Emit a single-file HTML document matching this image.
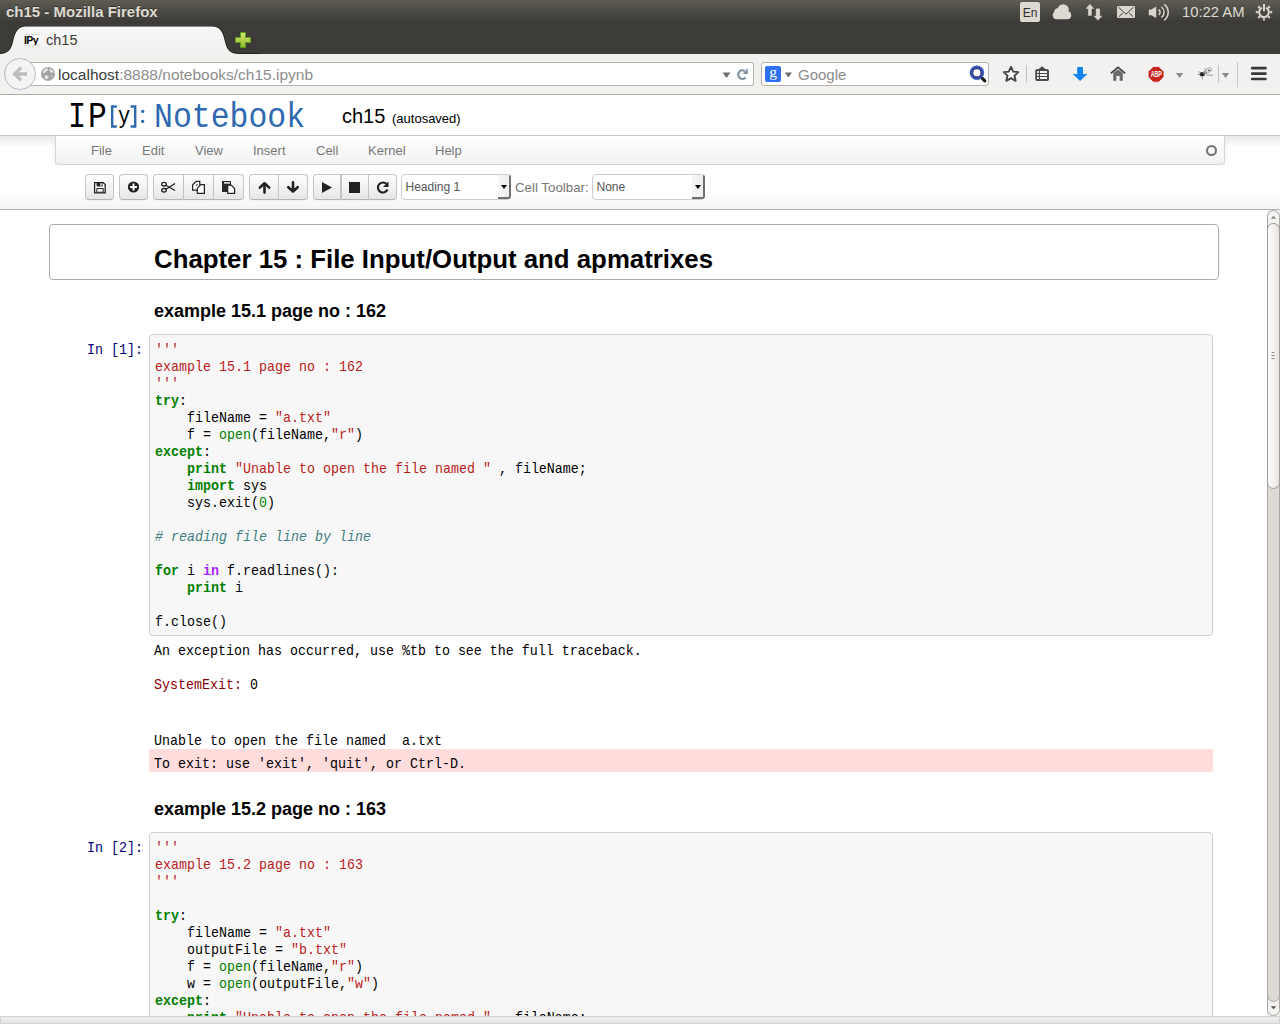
<!DOCTYPE html>
<html><head><meta charset="utf-8">
<style>
*{margin:0;padding:0;box-sizing:border-box}
html,body{width:1280px;height:1024px;overflow:hidden;background:#fff;font-family:"Liberation Sans",sans-serif;position:relative}
.abs{position:absolute}
#titlebar{left:0;top:0;width:1280px;height:26px;background:linear-gradient(#5f5c52 0px,#4f4d47 9px,#3c3b37 22px,#3c3b37)}
#titletext{left:6px;top:3px;font-size:15px;line-height:18px;font-weight:bold;color:#dfdbd2;text-shadow:0 -1px 0 rgba(0,0,0,.35)}
#tabbar{left:0;top:26px;width:1280px;height:28px;background:#3c3b37}
#navbar{left:0;top:54px;width:1280px;height:41px;background:#f2f1f0;border-bottom:1px solid #aeaca7}
.mono{font-family:"Liberation Mono",monospace}
pre{font-family:"Liberation Mono",monospace;font-size:14.4px;line-height:17px;white-space:pre;transform:scaleX(0.926);transform-origin:0 0}
.cm-s{color:#ba2121}
.cm-k{color:#008000;font-weight:bold}
.cm-b{color:#008000}
.cm-n{color:#080}
.cm-c{color:#408080;font-style:italic}
.cm-o{color:#aa22ff;font-weight:bold}
.prompt{font-family:"Liberation Mono",monospace;font-size:14.4px;color:#000080;line-height:17px;transform:scaleX(0.926);transform-origin:0 0}
.codebox{background:#f7f7f7;border:1px solid #cfcfcf;border-radius:4px}
.hd{font-weight:bold;color:#000}
</style></head><body>
<!-- title bar -->
<div id="titlebar" class="abs"></div>
<div id="titletext" class="abs">ch15 - Mozilla Firefox</div>
<!-- tab bar -->
<div id="tabbar" class="abs"></div>
<svg class="abs" style="left:0;top:26px" width="260" height="28">
  <defs><linearGradient id="tabg" x1="0" y1="0" x2="0" y2="1"><stop offset="0" stop-color="#f8f8f8"/><stop offset="1" stop-color="#f1f0ef"/></linearGradient>
  <linearGradient id="plg" x1="0" y1="0" x2="0" y2="1"><stop offset="0" stop-color="#d3e86a"/><stop offset="1" stop-color="#93b92e"/></linearGradient></defs>
  <rect x="0" y="27" width="260" height="1" fill="#222120"/>
  <path d="M-1,28 C8,28 11,24 13,16 C15,6 18,0.5 26,0.5 L212,0.5 C220,0.5 223,6 225,16 C227,24 230,28 239,28" fill="#1e1d1b" stroke="#1e1d1b" stroke-width="1.6"/>
  <path d="M-1,28 C8,28 11,24 13,16 C15,6 18,0.5 26,0.5 L212,0.5 C220,0.5 223,6 225,16 C227,24 230,28 239,28 Z" fill="url(#tabg)"/>
  <path d="M240.5,6.5 h5 v5 h5 v5 h-5 v5 h-5 v-5 h-5 v-5 h5 z" fill="url(#plg)" stroke="#5f9a22" stroke-width="1"/>
</svg>
<div class="abs" style="left:24px;top:34px;width:16px;height:12px;background:#fbfbfb;border-top:1px solid #d8d8d8;border-bottom:1px solid #d8d8d8;font-size:10.5px;font-weight:bold;color:#000;line-height:11px;letter-spacing:-0.6px;white-space:nowrap;overflow:hidden">IPy</div>
<div class="abs" style="left:46px;top:32px;font-size:14.5px;color:#3c3b37">ch15</div>
<!-- nav bar -->
<div id="navbar" class="abs"></div>
<div class="abs" style="left:28px;top:62px;width:726px;height:24px;background:#fff;border:1px solid #b7b4ae;border-left:none;border-radius:0 3px 3px 0"></div>
<svg class="abs" style="left:3px;top:57px" width="36" height="34">
  <circle cx="17" cy="17" r="15.5" fill="#f5f4f3" stroke="#b0bcc7" stroke-width="1"/>
  <path d="M18.2,10.6 L11.6,16.9 L18.2,23.2" fill="none" stroke="#bdbdbd" stroke-width="3.3" stroke-linejoin="miter"/><rect x="12.5" y="15.2" width="11.5" height="3.6" fill="#bdbdbd"/>
</svg>
<svg class="abs" style="left:40px;top:66px" width="16" height="16"><circle cx="8" cy="7.9" r="7" fill="#a3a3a3"/><path d="M3.2,5 C4.5,3 6.5,2.2 8,2.6 C8.5,4 7,5 6,5.5 C5.5,7 4,7.5 3,7 Z M9.5,3 C11.5,3 13,4.5 13.7,6.5 C12.5,7 11.5,6 10.5,6.3 C10,5 9.3,4 9.5,3 Z M5,9.5 C6.5,9 8.5,10 8.7,11.5 C8,13 6,13.5 5,12.5 C5,11.5 4.5,10.5 5,9.5 Z M11.5,9 C12.5,9.3 13,10.5 12.5,11.5 C12,11.5 11.3,10.5 11.5,9 Z" fill="#e9e9e9"/></svg>
<div class="abs" style="left:58px;top:66px;font-size:15.5px;line-height:18px;color:#3c3c3c;white-space:nowrap">localhost<span style="color:#8c8c8c">:8888/notebooks/ch15.ipynb</span></div>
<svg class="abs" style="left:720px;top:64px" width="34" height="20">
  <path d="M2.6,8.5 L10.5,8.5 L6.5,14 Z" fill="#6e6e6e"/>
  <path d="M24.8,7 A4.3,4.3 0 1 0 25.6,13.6" stroke="#8393a3" stroke-width="2.2" fill="none"/><path d="M22.6,9.9 L27.8,9.9 L27.8,4.1 Z" fill="#8393a3"/>
</svg>
<div class="abs" style="left:761px;top:62px;width:228px;height:24px;background:#fff;border:1px solid #b7b4ae;border-radius:3px"></div>
<svg class="abs" style="left:765px;top:66px" width="16" height="16"><rect width="16" height="16" rx="2" fill="#2f6ff5"/><text x="8" y="11" font-size="15.5" font-family="Liberation Serif" fill="#fff" text-anchor="middle">g</text></svg>
<svg class="abs" style="left:783px;top:72px" width="10" height="8"><path d="M1.8,0.6 L9,0.6 L5.4,5.6 Z" fill="#6e6e6e"/></svg>
<div class="abs" style="left:798px;top:66px;font-size:15px;line-height:18px;color:#8c8c8c">Google</div>
<svg class="abs" style="left:968px;top:64px" width="20" height="20">
  <path d="M13.2,13.2 L16.8,16.8" stroke="#1d1b18" stroke-width="3.2" stroke-linecap="round"/>
  <circle cx="8.9" cy="8.8" r="5.5" fill="#fbfbfb" stroke="#3d4fb3" stroke-width="3"/>
  <circle cx="8.9" cy="8.8" r="4.1" fill="none" stroke="#1c1f5a" stroke-width="0.9"/>
  <circle cx="8.9" cy="8.8" r="6.9" fill="none" stroke="#2a5aa8" stroke-width="0.6"/>
</svg>
<!-- toolbar icons -->
<svg class="abs" style="left:1000px;top:62px" width="280" height="26">
  <path d="M11,4.8 L13.2,9.6 L18.3,10.1 L14.5,13.6 L15.6,18.8 L11,16.2 L6.4,18.8 L7.5,13.6 L3.7,10.1 L8.8,9.6 Z" fill="#fafafa" stroke="#474747" stroke-width="1.9" stroke-linejoin="round"/>
  <rect x="26" y="3" width="1" height="18" fill="#bcc5ce"/>
  <path d="M42,4.2 L46,7.5 L38,7.5 Z" fill="#4a4a4a"/>
  <rect x="35.2" y="7" width="13.8" height="12" rx="2" fill="#4a4a4a"/>
  <g fill="#f2f2f2"><rect x="37" y="9" width="1.8" height="2"/><rect x="37" y="12" width="1.8" height="2"/><rect x="37" y="15" width="1.8" height="2"/>
  <rect x="40" y="9" width="7" height="2"/><rect x="40" y="12" width="7" height="2"/><rect x="40" y="15" width="7" height="2"/></g>
  <path d="M77.2,5 h5.8 v7 h4.3 l-7.2,7 l-7.2,-7 h4.3 z" fill="#0f83f0"/>
  <path d="M110.8,11.3 L118,5.3 L125.2,11.3" fill="none" stroke="#3e3e3e" stroke-width="1.7" stroke-linejoin="miter"/><path d="M113.2,10.8 L118,7.6 L122.8,10.8 V18.8 H119.6 V14 H116.4 V18.8 H113.2 Z" fill="#6b6b6b"/>
  <polygon points="153.3,4.4 158.8,4.4 164,9.6 164,15 158.8,20.2 153.3,20.2 148.1,15 148.1,9.6" fill="#c9231f" stroke="#f0f0f0" stroke-width="0.9"/>
  <text x="156.2" y="15.1" font-size="8.6" font-weight="bold" fill="#fff" text-anchor="middle" font-family="Liberation Sans" textLength="11" lengthAdjust="spacingAndGlyphs" transform="translate(0,-2.3) scale(1,1.15)">ABP</text>
  <path d="M176,11 L183.2,11 L179.6,16 Z" fill="#8a8a8a"/>
  <g><ellipse cx="202.2" cy="12.2" rx="2.6" ry="2.2" fill="#2a2a2a"/><ellipse cx="205" cy="10.5" rx="2.2" ry="1.6" fill="#888"/><ellipse cx="208.5" cy="8.2" rx="3.6" ry="2.2" transform="rotate(-25 208.5 8.2)" fill="#dcdcdc" stroke="#999" stroke-width="0.6"/><ellipse cx="209" cy="8.5" rx="1.2" ry="0.8" fill="#555"/><path d="M198,9.5 L201,11 M197.5,12.5 L200,12.5 M202,14.5 L202.5,17.5 M206,13 L213,13.2 M204.5,6 L206,9" stroke="#777" stroke-width="0.7"/></g>
  <rect x="218" y="3" width="1" height="18" fill="#c4c2be"/>
  <path d="M222,11 L229.2,11 L225.6,16 Z" fill="#8a8a8a"/>
  <rect x="237" y="0" width="1" height="25" fill="#c4c8cc"/>
  <path d="M252.2,6.2 h13.3 M252.2,11.6 h13.3 M252.2,17 h13.3" stroke="#3a3a3a" stroke-width="2.7" stroke-linecap="round"/>
</svg>
<!-- indicator icons -->
<div class="abs" style="left:1020px;top:2px;width:20px;height:20px;background:#dedad2;border-radius:2px;color:#2e2d2a;font-size:12px;line-height:22px;text-align:center">En</div>
<svg class="abs" style="left:1050px;top:0px" width="230" height="24">
  <g fill="#dedad2"><rect x="2.8" y="11.2" width="18.4" height="8.1" rx="4"/><circle cx="13.2" cy="9.8" r="5.6"/><circle cx="7.8" cy="11.8" r="3.5"/></g>
  <path d="M40,3.5 L44.8,9 L42,9 L42,16 L37.8,16 L37.8,9 L35,9 Z M48,20.7 L53,15.5 L50.3,15.5 L50.3,8.2 L45.6,8.2 L45.6,15.5 L42.9,15.5 Z" fill="#dad6cd" stroke="#2a2a26" stroke-width="0.5"/>
  <rect x="67" y="6" width="18" height="12" rx="1" fill="#dad6cd"/>
  <path d="M68.5,7.2 L76,14.2 L83.5,7.2 M68.8,16.8 L72.8,13 M83.2,16.8 L79.2,13" stroke="#3c3b37" stroke-width="1" fill="none"/>
  <path d="M98.8,9.4 h2.6 l4.8,-2.8 v11.4 l-4.8,-2.8 h-2.6 z" fill="#dad6cd"/>
  <path d="M108.6,9.5 a3.2,3.2 0 0 1 0,5.4 M111.4,7 a6.5,6.5 0 0 1 0,10.5 M114.2,4.3 a10,10 0 0 1 0,16" stroke="#dad6cd" stroke-width="1.5" fill="none"/>
  <g transform="translate(214,12.2)" fill="none" stroke="#dad6cd">
    <circle r="4.9" stroke-width="2.1" stroke-dasharray="26 4.8" transform="rotate(-66)"/>
    <path d="M0,-8.2 v7.2" stroke-width="2"/>
    <path d="M8.2,0 h-2 M-8.2,0 h2 M5.8,5.8 l-1.5,-1.5 M-5.8,5.8 l1.5,-1.5 M5.8,-5.8 l-1.5,1.5 M-5.8,-5.8 l1.5,1.5 M0,8.2 v-2" stroke-width="2.2"/>
  </g>
</svg>
<div class="abs" style="left:1182px;top:3px;font-size:14.8px;line-height:18px;color:#dfdbd2">10:22 AM</div>

<!-- notebook header -->
<div class="abs" style="left:0;top:95px;width:1280px;height:41px;background:#fff;border-bottom:1px solid #c8c8c8"></div>
<div class="abs mono" style="left:68.4px;top:98px;font-size:36px;line-height:40px;color:#000;transform:scaleX(0.84);transform-origin:0 0">I</div>
<div class="abs mono" style="left:87.6px;top:98px;font-size:36px;line-height:40px;color:#000;transform:scaleX(0.87);transform-origin:0 0">P</div>
<svg class="abs" style="left:100px;top:100px" width="50" height="30">
 <path d="M16.8,6.5 h-4.6 v20 h4.6" fill="none" stroke="#2f69b0" stroke-width="2.4"/>
 <path d="M30.6,6.5 h4.6 v20 h-4.6" fill="none" stroke="#2f69b0" stroke-width="2.4"/>
 <circle cx="42.7" cy="11.4" r="1.7" fill="#2f69b0"/><circle cx="42.7" cy="21.4" r="1.7" fill="#2f69b0"/>
</svg>
<div class="abs mono" style="left:118px;top:101.5px;font-size:23.5px;line-height:30px;color:#000;transform:scaleX(0.87);transform-origin:0 0">y</div>
<div class="abs mono" style="left:154.3px;top:98px;font-size:34.5px;line-height:40px;color:#2f69b0;transform:scaleX(0.912);transform-origin:0 0;white-space:nowrap">Notebook</div>
<div class="abs" style="left:342px;top:105px;font-size:20px;line-height:23px;color:#000;white-space:nowrap">ch15</div><div class="abs" style="left:392px;top:111px;font-size:13px;line-height:15px;color:#000;white-space:nowrap">(autosaved)</div>

<div class="abs" style="left:0;top:136px;width:1280px;height:12px;background:linear-gradient(rgba(87,87,87,0.13),rgba(87,87,87,0))"></div>
<!-- menubar -->
<div class="abs" style="left:55px;top:135px;width:1170px;height:30px;background:linear-gradient(#fff,#f2f2f2);border:1px solid #d4d4d4;border-top-color:#c8c8c8;border-radius:0 0 4px 4px;box-shadow:0 1px 4px rgba(0,0,0,0.065)"></div>
<div class="abs" style="left:91px;top:143px;font-size:13px;color:#777;white-space:nowrap;line-height:15px">
<span class="abs" style="left:0">File</span><span class="abs" style="left:51px">Edit</span><span class="abs" style="left:104px">View</span><span class="abs" style="left:162px">Insert</span><span class="abs" style="left:225px">Cell</span><span class="abs" style="left:277px">Kernel</span><span class="abs" style="left:344px">Help</span>
</div>
<div class="abs" style="left:1206px;top:145px;width:11px;height:11px;border:2px solid #737373;border-radius:50%"></div>

<!-- toolbar -->
<div class="abs" style="left:0;top:165px;width:1280px;height:45px;background:linear-gradient(#fff 60%,#f4f4f4);border-bottom:1px solid #b5b5b5"></div>

<!-- toolbar buttons -->
<style>
.btn{position:absolute;top:174px;height:26px;background:linear-gradient(#ffffff,#e6e6e6);border:1px solid #c5c5c5;border-bottom-color:#b3b3b3;box-shadow:0 1px 2px rgba(0,0,0,.05)}
.r{border-radius:4px}.rl{border-radius:4px 0 0 4px}.rr{border-radius:0 4px 4px 0}.r0{border-radius:0;border-left:none}
.sel{position:absolute;top:174px;height:25.5px;background:#fff;border:1px solid #cdcdcd;border-radius:4px;font-size:12px;color:#555;line-height:15px;padding-left:3.5px;padding-top:5px}
.selbtn{position:absolute;top:0px;right:-1px;width:13px;height:24px;background:linear-gradient(90deg,#f6f6f6,#eeeeee);border-right:2px solid #707070;border-bottom:2px solid #707070;border-radius:0 2px 3px 0}
.selbtn:after{content:"";position:absolute;left:2.5px;top:9.5px;border-left:3.5px solid transparent;border-right:3.5px solid transparent;border-top:4px solid #000}
</style>
<div class="btn r" style="left:85px;width:29px"></div>
<div class="btn r" style="left:119px;width:29px"></div>
<div class="btn rl" style="left:153px;width:31px"></div>
<div class="btn r0" style="left:184px;width:30px"></div>
<div class="btn rr" style="left:213px;width:31px;border-left:1px solid #c5c5c5"></div>
<div class="btn rl" style="left:249px;width:30px"></div>
<div class="btn rr" style="left:278px;width:30px"></div>
<div class="btn rl" style="left:313px;width:28px"></div>
<div class="btn r0" style="left:341px;width:28px;border-left:1px solid #c5c5c5"></div>
<div class="btn rr" style="left:368px;width:29px"></div>
<svg class="abs" style="left:85px;top:174px" width="320" height="26">
 <!-- save -->
 <path d="M9.6,8.6 h8.6 l2,2 v8.2 h-10.6 z" fill="#fff" stroke="#222" stroke-width="1.3"/>
 <rect x="11.6" y="8.6" width="6" height="3.8" fill="#222"/><rect x="15.2" y="9.3" width="1.5" height="2.3" fill="#fff"/>
 <rect x="11.8" y="14.6" width="6.4" height="3.6" fill="#fff" stroke="#222" stroke-width="1"/>
 <!-- plus circle -->
 <circle cx="48.5" cy="13" r="5.6" fill="#222"/>
 <path d="M48.5,9.6 v6.8 M45.1,13 h6.8" stroke="#fff" stroke-width="2"/>
 <!-- scissors -->
 <g fill="none" stroke="#222" stroke-width="1.3">
 <ellipse cx="79" cy="10.2" rx="2.3" ry="1.8"/><ellipse cx="79" cy="16.3" rx="2.3" ry="1.8"/>
 <path d="M81,11.2 L90,16.5 M81,15.3 L90,9.5"/>
 </g>
 <!-- copy -->
 <path d="M107.6,11 L111.2,7.4 H114.8 V16.2 H107.6 Z" fill="#fff" stroke="#222" stroke-width="1.2" stroke-linejoin="miter"/>
 <path d="M111.2,11.6 L112.5,10.3" stroke="#222" stroke-width="1.2"/>
 <path d="M112.3,14.2 L115.9,10.6 H119.4 V19.3 H112.3 Z" fill="#fff" stroke="#222" stroke-width="1.2" stroke-linejoin="miter"/>
 <!-- paste -->
 <rect x="137" y="7" width="9" height="11" fill="#2a2a2a"/><rect x="139" y="8.2" width="6" height="1.4" fill="#fff"/>
 <path d="M142.7,11.2 H146.2 L149.6,14.6 V19.3 H142.7 Z" fill="#fff" stroke="#222" stroke-width="1.2"/>
 <!-- up -->
 <path d="M174.8,13.6 L179.5,9.3 L184.2,13.6 M179.5,10 V18.6" fill="none" stroke="#222" stroke-width="2.6" stroke-linecap="round" stroke-linejoin="round"/>
 <!-- down -->
 <path d="M203.3,13.2 L208,17.5 L212.7,13.2 M208,16.8 V8.4" fill="none" stroke="#222" stroke-width="2.6" stroke-linecap="round" stroke-linejoin="round"/>
 <!-- play -->
 <path d="M237,8 L247,13.5 L237,19 Z" fill="#222"/>
 <!-- stop -->
 <rect x="264" y="8" width="11" height="11" fill="#222"/>
 <!-- repeat -->
 <path d="M301.5,10 A5,5 0 1 0 302.5,15.5" fill="none" stroke="#222" stroke-width="2.2"/>
 <path d="M303.5,7.5 L303.5,13 L298,13 Z" fill="#222"/>
</svg>
<div class="sel" style="left:401px;width:110px">Heading 1<div class="selbtn"></div></div>
<div class="abs" style="left:515px;top:180px;font-size:13.3px;color:#777;white-space:nowrap;line-height:15px">Cell Toolbar:</div>
<div class="sel" style="left:592px;width:113px">None<div class="selbtn"></div></div>

<!-- notebook -->
<div class="abs" style="left:49px;top:224px;width:1170px;height:56px;border:1px solid #ababab;border-radius:4px"></div>
<div class="abs hd" style="left:154px;top:244px;font-size:25.8px;white-space:nowrap;line-height:30px">Chapter 15 : File Input/Output and apmatrixes</div>
<div class="abs hd" style="left:154px;top:300px;font-size:18px;white-space:nowrap;line-height:22px">example 15.1 page no : 162</div>

<div class="abs prompt" style="left:87px;top:342px">In [1]:</div>
<div class="abs codebox" style="left:149px;top:334px;width:1064px;height:302px"></div>
<pre class="abs" style="left:155px;top:342px"><span class="cm-s">'''
example 15.1 page no : 162
'''</span>
<span class="cm-k">try</span>:
    fileName = <span class="cm-s">"a.txt"</span>
    f = <span class="cm-b">open</span>(fileName,<span class="cm-s">"r"</span>)
<span class="cm-k">except</span>:
    <span class="cm-k">print</span> <span class="cm-s">"Unable to open the file named "</span> , fileName;
    <span class="cm-k">import</span> sys
    sys.exit(<span class="cm-n">0</span>)

<span class="cm-c"># reading file line by line</span>

<span class="cm-k">for</span> i <span class="cm-o">in</span> f.readlines():
    <span class="cm-k">print</span> i

f.close()</pre>

<pre class="abs" style="left:154px;top:643px">An exception has occurred, use %tb to see the full traceback.

<span style="color:#8b0000">SystemExit:</span> 0</pre>
<pre class="abs" style="left:154px;top:733px">Unable to open the file named  a.txt</pre>
<div class="abs" style="left:149px;top:749px;width:1064px;height:23px;background:#fdd"></div>
<pre class="abs" style="left:154px;top:756px">To exit: use 'exit', 'quit', or Ctrl-D.</pre>

<div class="abs hd" style="left:154px;top:798px;font-size:18px;white-space:nowrap;line-height:22px">example 15.2 page no : 163</div>
<div class="abs prompt" style="left:87px;top:840px">In [2]:</div>
<div class="abs codebox" style="left:149px;top:832px;width:1064px;height:300px"></div>
<pre class="abs" style="left:155px;top:840px"><span class="cm-s">'''
example 15.2 page no : 163
'''</span>

<span class="cm-k">try</span>:
    fileName = <span class="cm-s">"a.txt"</span>
    outputFile = <span class="cm-s">"b.txt"</span>
    f = <span class="cm-b">open</span>(fileName,<span class="cm-s">"r"</span>)
    w = <span class="cm-b">open</span>(outputFile,<span class="cm-s">"w"</span>)
<span class="cm-k">except</span>:
    <span class="cm-k">print</span> <span class="cm-s">"Unable to open the file named "</span> , fileName;</pre>

<!-- scrollbar -->
<div class="abs" style="left:1267px;top:210px;width:13px;height:806px;background:#eeedeb"></div>
<div class="abs" style="left:1267px;top:210px;width:13px;height:30px;background:#f4f3f2;border:1px solid #aaa7a2;border-radius:6.5px"></div>
<div class="abs" style="left:1267px;top:986px;width:13px;height:30px;background:#f4f3f2;border:1px solid #aaa7a2;border-radius:6.5px"></div>
<div class="abs" style="left:1267px;top:223px;width:13px;height:779px;background:#dddad6;border:1px solid #aaa7a2;border-radius:6.5px"></div>
<div class="abs" style="left:1267px;top:223px;width:13px;height:266px;background:linear-gradient(90deg,#fbfbfa,#f3f2f1 50%,#e6e4e2);border:1px solid #a19e99;border-radius:6.5px"></div>
<svg class="abs" style="left:1267px;top:210px" width="13" height="806">
 <path d="M3.8,8.8 L6.5,5.8 L9.2,8.8 Z" fill="#8a8a8a"/>
 <path d="M4.5,142.5 h3 M4.5,145.5 h3 M4.5,148.5 h3" stroke="#8f8d89" stroke-width="1"/>
 <path d="M3.8,796.2 L6.5,799.2 L9.2,796.2 Z" fill="#555"/>
</svg>
<!-- bottom bar -->
<div class="abs" style="left:0;top:1016px;width:1280px;height:8px;background:linear-gradient(#eeeeee,#e3e3e3);border:1px solid #d3d3d3"></div>
</body></html>
